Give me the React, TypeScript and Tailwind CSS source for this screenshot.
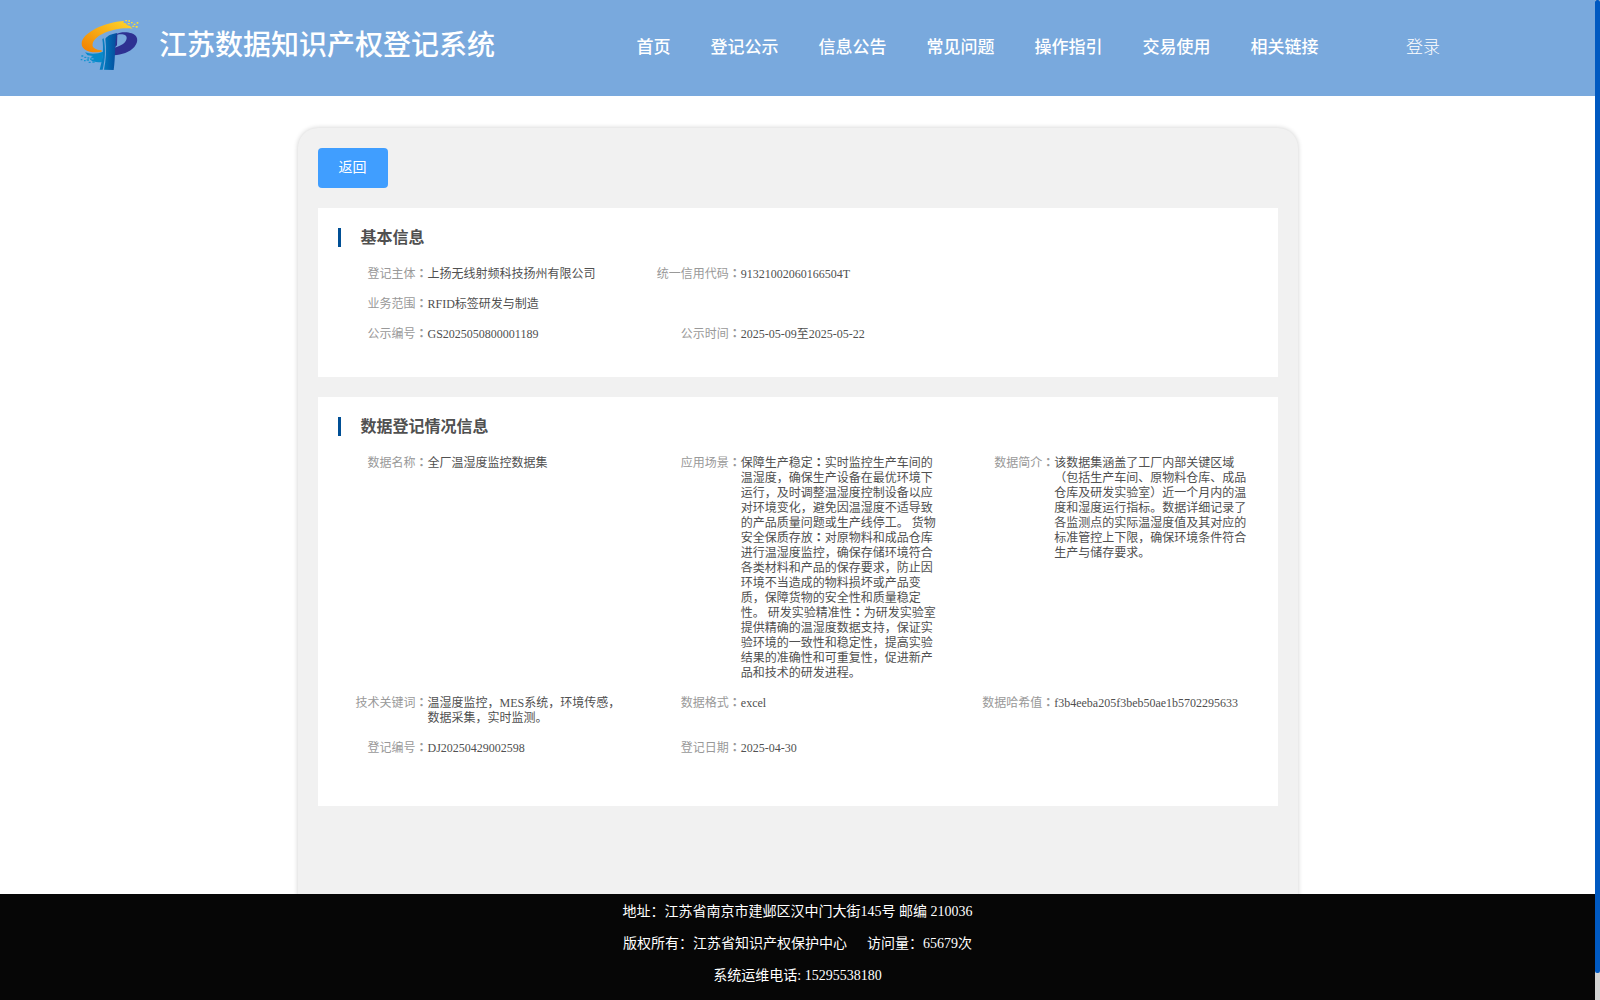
import { Fragment } from 'react';

const navItems = ['首页', '登记公示', '信息公告', '常见问题', '操作指引', '交易使用', '相关链接'];

type Field = {
  label: string;
  lines: string[];
};

const basicInfo: (Field | null)[] = [
  { label: '登记主体', lines: ['上扬无线射频科技扬州有限公司'] },
  { label: '统一信用代码', lines: ['91321002060166504T'] },
  null,
  { label: '业务范围', lines: ['RFID标签研发与制造'] },
  null,
  null,
  { label: '公示编号', lines: ['GS2025050800001189'] },
  { label: '公示时间', lines: ['2025-05-09至2025-05-22'] },
  null,
];

const dataInfo: (Field | null)[] = [
  { label: '数据名称', lines: ['全厂温湿度监控数据集'] },
  {
    label: '应用场景',
    lines: [
      '保障生产稳定：实时监控生产车间的',
      '温湿度，确保生产设备在最优环境下',
      '运行，及时调整温湿度控制设备以应',
      '对环境变化，避免因温湿度不适导致',
      '的产品质量问题或生产线停工。 货物',
      '安全保质存放：对原物料和成品仓库',
      '进行温湿度监控，确保存储环境符合',
      '各类材料和产品的保存要求，防止因',
      '环境不当造成的物料损坏或产品变',
      '质，保障货物的安全性和质量稳定',
      '性。 研发实验精准性：为研发实验室',
      '提供精确的温湿度数据支持，保证实',
      '验环境的一致性和稳定性，提高实验',
      '结果的准确性和可重复性，促进新产',
      '品和技术的研发进程。',
    ],
  },
  {
    label: '数据简介',
    lines: [
      '该数据集涵盖了工厂内部关键区域',
      '（包括生产车间、原物料仓库、成品',
      '仓库及研发实验室）近一个月内的温',
      '度和湿度运行指标。数据详细记录了',
      '各监测点的实际温湿度值及其对应的',
      '标准管控上下限，确保环境条件符合',
      '生产与储存要求。',
    ],
  },
  { label: '技术关键词', lines: ['温湿度监控，MES系统，环境传感，', '数据采集，实时监测。'] },
  { label: '数据格式', lines: ['excel'] },
  { label: '数据哈希值', lines: ['f3b4eeba205f3beb50ae1b5702295633'] },
  { label: '登记编号', lines: ['DJ20250429002598'] },
  { label: '登记日期', lines: ['2025-04-30'] },
  null,
];

function Logo() {
  return (
    <svg viewBox="60 54 180 162" className="h-[54px] w-[60px] shrink-0">
      <defs>
        <linearGradient id="swoosh" x1="0" y1="1" x2="1" y2="0">
          <stop offset="0" stopColor="#f07d00" />
          <stop offset="1" stopColor="#ffd82a" />
        </linearGradient>
        <linearGradient id="stem" x1="0" y1="0" x2="1" y2="0">
          <stop offset="0" stopColor="#0079bd" />
          <stop offset="1" stopColor="#064a9b" />
        </linearGradient>
      </defs>
      <path
        d="M125 155C92 161 65 151 65 131C66 98 135 66 192 63L190 68L197 70L202 76L210 78L218 86C166 80 106 103 98 131C95 143 107 149 125 151Z"
        fill="url(#swoosh)"
      />
      <path d="M196 60h5v4h-5zM205 61h5v4h-5zM213 66h5v4h-5zM203 69h6v4h-6zM221 71h5v4h-5zM230 66h5v5h-5zM217 77h6v4h-6zM227 78h6v5h-6z" fill="#ffdc32" />
      <path
        d="M165 103C185 94 203 96 215 100C234 107 237 124 223 141C209 157 185 164 162 166L163 143C184 138 199 128 200 115C201 104 188 101 172 104L171 136L163 143Z"
        fill="#2e3192"
      />
      <path d="M136 116C143 107 153 102 171 99C163 132 167 170 161 210L132 209C138 180 140 146 136 116Z" fill="url(#stem)" />
      <path d="M127 117C132 150 127 181 119 209L128 209C136 176 137 147 131 115Z" fill="#087dc1" />
      <path d="M75 157C95 164 113 161 130 155L126 186C110 188 98 185 92 180L103 177L91 172L99 168L83 166Z" fill="#078aca" />
      <path d="M64 166h6v4h-6zM73 170h6v4h-6zM62 177h5v4h-5zM82 172h6v4h-6zM72 180h5v4h-5zM80 178h7v4h-7zM90 175h7v5h-7zM86 185h6v4h-6zM97 184h7v4h-7z" fill="#1595d1" />
    </svg>
  );
}

// Colons sit in the middle of their box, unlike the rest of the SC punctuation
function Line({ text }: { text: string }) {
  return (
    <>
      {text.split('：').map((part, i) => (
        <Fragment key={i}>
          {i > 0 && <span className="font-['Noto_Sans_CJK_TC',sans-serif] leading-[0] font-bold">：</span>}
          {part}
        </Fragment>
      ))}
    </>
  );
}

function FieldGrid({ fields }: { fields: (Field | null)[] }) {
  return (
    <div className="mt-5 -mr-5 grid grid-cols-3 gap-y-[15px] text-xs leading-[15px]">
      {fields.map((field, i) =>
        field ? (
          <div key={i} className="flex min-w-0">
            <div className="h-[15px] w-[90px] shrink-0 text-right whitespace-nowrap text-[#999]">
              <Line text={`${field.label}：`} />
            </div>
            <div className="whitespace-pre text-[#505050]">
              {field.lines.map((line) => (
                <div key={line} className="h-[15px]">
                  <Line text={line} />
                </div>
              ))}
            </div>
          </div>
        ) : (
          <div key={i} />
        )
      )}
    </div>
  );
}

function SectionTitle({ children }: { children: string }) {
  return (
    <h2 className="h-[19px] border-l-3 border-[#004f95] pl-5 text-base leading-5 font-bold text-[#505050]">
      {children}
    </h2>
  );
}

export default function App() {
  return (
    <div className="flex h-[1000px] w-[1600px] overflow-hidden bg-white font-['Liberation_Serif','Noto_Sans_CJK_SC',serif]">
      <div className="flex w-[1595px] flex-col">
        <header className="flex h-24 shrink-0 bg-[#79a9dd] pl-20 text-white">
          <div className="flex w-[536.5px] pt-[18px]">
            <Logo />
            <h1 className="ml-[19px] text-[28px] leading-[56px] font-medium whitespace-nowrap">江苏数据知识产权登记系统</h1>
          </div>
          <nav className="flex text-[17px] leading-[95px] whitespace-nowrap">
            {navItems.map((item) => (
              <a key={item} className="px-5 font-medium">
                {item}
              </a>
            ))}
            <a className="ml-[67.5px] font-light">登录</a>
          </nav>
        </header>

        <main className="flex flex-1 justify-center overflow-hidden pt-8">
          <div className="h-[900px] w-[1000px] rounded-[20px] bg-[#f1f1f1] p-5 shadow-[0_0_5px_rgba(0,0,0,0.2)]">
            <button className="block h-10 w-[70px] rounded bg-[#409eff] text-sm leading-10 text-white">返回</button>
            <section className="mt-5 h-[169px] bg-white p-5">
              <SectionTitle>基本信息</SectionTitle>
              <FieldGrid fields={basicInfo} />
            </section>
            <section className="mt-5 h-[409px] bg-white p-5">
              <SectionTitle>数据登记情况信息</SectionTitle>
              <FieldGrid fields={dataInfo} />
            </section>
          </div>
        </main>

        <footer className="h-[106px] shrink-0 bg-[#060606] pt-0.5 text-center text-sm leading-8 text-white">
          <p>地址：江苏省南京市建邺区汉中门大街145号 邮编 210036</p>
          <p>
            版权所有：江苏省知识产权保护中心<span className="ml-5">访问量：65679次</span>
          </p>
          <p>系统运维电话: 15295538180</p>
        </footer>
      </div>

      {/* Scrollbar */}
      <div className="w-[5px] bg-[#d2d2d2]">
        <div className="h-[973px] rounded-[2px] bg-[#0059c1]" />
      </div>
    </div>
  );
}
